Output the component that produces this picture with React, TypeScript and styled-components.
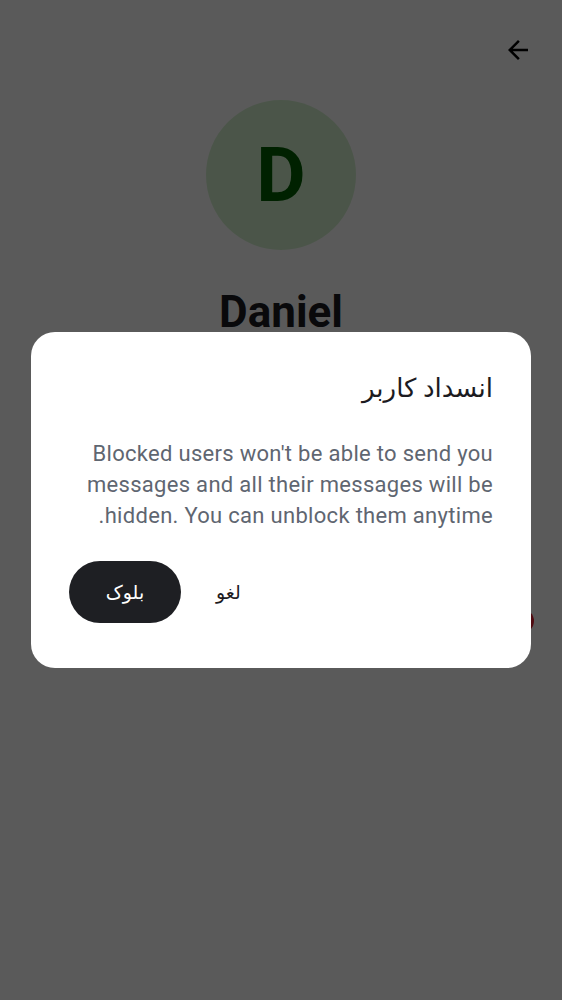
import React from "react";
import styled, { createGlobalStyle } from "styled-components";

const GlobalStyle = createGlobalStyle`
  html, body { margin: 0; padding: 0; background: #ffffff; }
  body { font-family: Roboto, "Noto Sans", "DejaVu Sans", sans-serif; }
  * { box-sizing: border-box; }
`;

const Page = styled.div`
  position: relative;
  height: 1000px;
  background: #ffffff;
  direction: rtl;
  padding: 35px 28px 0 28px;
  display: flex;
  flex-direction: column;
  align-items: center;
  overflow: hidden;
`;

const TopBar = styled.div`
  width: 100%;
  display: flex;
  justify-content: flex-start;
  padding-right: 1px;
`;

const BackButton = styled.button`
  width: 30px;
  height: 30px;
  padding: 0;
  border: none;
  background: transparent;
  display: flex;
  align-items: center;
  justify-content: center;
  color: #000000;
`;

const Avatar = styled.div`
  margin-top: 35px;
  width: 150px;
  height: 150px;
  border-radius: 50%;
  background: #d5f1d0;
  display: flex;
  align-items: center;
  justify-content: center;
  color: #005f00;
  font-family: Roboto, sans-serif;
  font-weight: 700;
  font-size: 76px;
  line-height: 1;
`;

const Name = styled.h1`
  margin: 36px 0 0 0;
  font-family: Roboto, sans-serif;
  font-weight: 700;
  font-size: 44px;
  line-height: 52px;
  color: #1c1b1f;
`;

const ActionRow = styled.div`
  width: 100%;
  margin-top: 271px;
  display: flex;
  justify-content: flex-start;
`;

const RedDot = styled.span`
  width: 24px;
  height: 24px;
  border-radius: 50%;
  background: #e11d2e;
`;

const Overlay = styled.div`
  position: fixed;
  inset: 0;
  background: rgba(0, 0, 0, 0.647);
  display: flex;
  align-items: center;
  justify-content: center;
`;

const Dialog = styled.div`
  width: 500px;
  background: #ffffff;
  border-radius: 24px;
  padding: 38px 38px 45px 38px;
  direction: rtl;
  display: flex;
  flex-direction: column;
`;

const Title = styled.h2`
  margin: 0;
  font-family: Roboto, "Noto Sans", "DejaVu Sans", sans-serif;
  font-weight: 400;
  font-size: 26px;
  line-height: 36px;
  color: #1c1b1f;
  text-align: right;
`;

const Body = styled.p`
  margin: 32px 0 0 0;
  font-family: Roboto, sans-serif;
  font-size: 22px;
  letter-spacing: 0.3px;
  line-height: 31px;
  color: #5f6671;
  text-align: right;
  direction: rtl;
`;

const Actions = styled.div`
  margin-top: 30px;
  display: flex;
  align-items: center;
  gap: 11px;
  direction: ltr;
  flex-direction: row-reverse;
  justify-content: flex-end;
`;

const TextButton = styled.button`
  height: 62px;
  padding: 0 24px;
  border: none;
  background: transparent;
  color: #1c1b1f;
  font-family: Roboto, "Noto Sans", "DejaVu Sans", sans-serif;
  font-size: 19px;
`;

const FilledButton = styled.button`
  width: 112px;
  height: 62px;
  border: none;
  border-radius: 31px;
  background: #1e1f23;
  color: #ffffff;
  font-family: Roboto, "Noto Sans", "DejaVu Sans", sans-serif;
  font-size: 19px;
`;

export default function App() {
  return (
    <>
      <GlobalStyle />
      <Page>
        <TopBar>
          <BackButton aria-label="back">
            <svg width="30" height="30" viewBox="0 0 24 24" fill="currentColor">
              <path d="M20 11H7.83l5.59-5.59L12 4l-8 8 8 8 1.41-1.41L7.83 13H20v-2z" />
            </svg>
          </BackButton>
        </TopBar>
        <Avatar>D</Avatar>
        <Name>Daniel</Name>
        <ActionRow>
          <RedDot />
        </ActionRow>
      </Page>
      <Overlay>
        <Dialog>
          <Title>انسداد کاربر</Title>
          <Body>
            Blocked users won't be able to send you messages and all their messages will be hidden. You can unblock them anytime.
          </Body>
          <Actions>
            <TextButton>لغو</TextButton>
            <FilledButton>بلوک</FilledButton>
          </Actions>
        </Dialog>
      </Overlay>
    </>
  );
}
